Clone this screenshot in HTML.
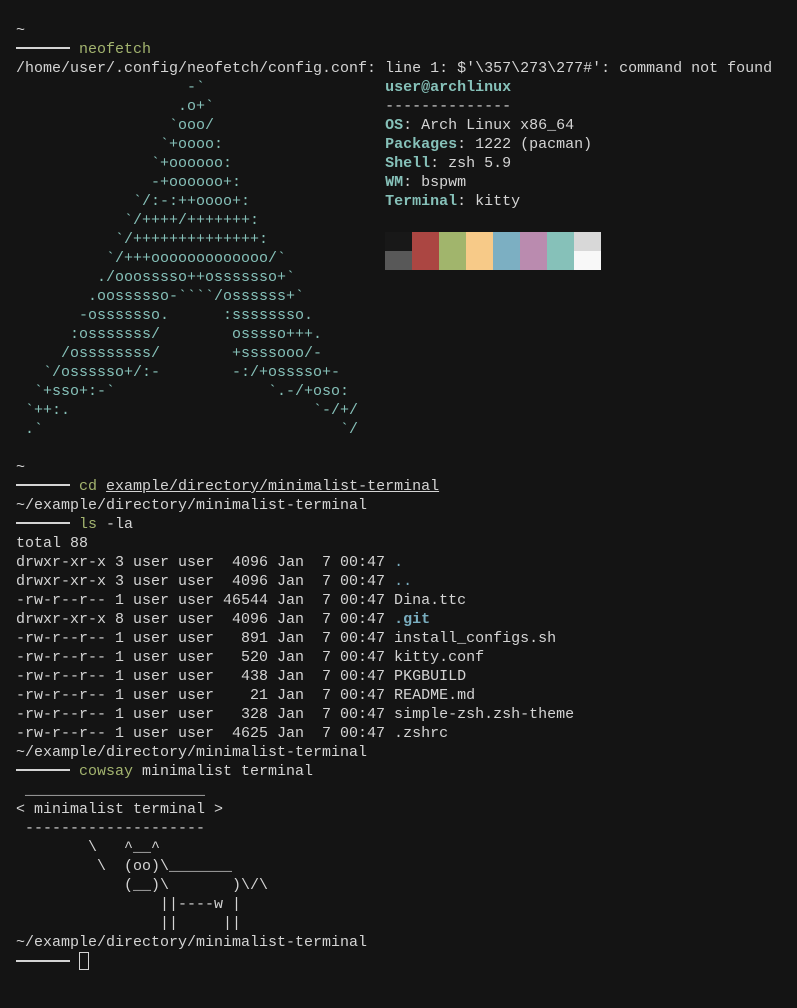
<!DOCTYPE html>
<html><head><meta charset="utf-8"><style>
html,body{margin:0;padding:0;background:#141414;width:797px;height:1008px;overflow:hidden}
pre{margin:0;position:absolute;left:16px;top:21px;font-family:"Liberation Mono","DejaVu Sans Mono",monospace;font-size:15px;line-height:19px;color:#d4d4d4;letter-spacing:0}
.c{color:#86c1b9}.b{color:#86c1b9;font-weight:bold}.g{color:#a3b46f}.bl{color:#7aaec0}.blb{color:#7aaec0;font-weight:bold}
.p{display:inline-block;width:54px;height:2px;background:#d4d4d4;vertical-align:middle;margin-right:9px;position:relative;top:-1px}
.u{text-decoration:underline}
.cur{display:inline-block;width:8px;height:16px;border:1px solid #d4d4d4;vertical-align:-4px}
.pal{position:absolute;left:385px;top:232px;display:grid;grid-template-columns:repeat(8,27px);grid-template-rows:19px 19px}
</style></head><body>
<pre>~
<span class="p"></span><span class="g">neofetch</span>
/home/user/.config/neofetch/config.conf: line 1: $'\357\273\277#': command not found
<span class="c">                   -&#96;                    </span><span class="b">user@archlinux</span>
<span class="c">                  .o+&#96;                   </span>--------------
<span class="c">                 &#96;ooo/                   </span><span class="b">OS</span>: Arch Linux x86_64
<span class="c">                &#96;+oooo:                  </span><span class="b">Packages</span>: 1222 (pacman)
<span class="c">               &#96;+oooooo:                 </span><span class="b">Shell</span>: zsh 5.9
<span class="c">               -+oooooo+:                </span><span class="b">WM</span>: bspwm
<span class="c">             &#96;/:-:++oooo+:               </span><span class="b">Terminal</span>: kitty
<span class="c">            &#96;/++++/+++++++:</span>
<span class="c">           &#96;/++++++++++++++:</span>
<span class="c">          &#96;/+++ooooooooooooo/&#96;</span>
<span class="c">         ./ooosssso++osssssso+&#96;</span>
<span class="c">        .oossssso-&#96;&#96;&#96;&#96;/ossssss+&#96;</span>
<span class="c">       -osssssso.      :ssssssso.</span>
<span class="c">      :osssssss/        osssso+++.</span>
<span class="c">     /ossssssss/        +ssssooo/-</span>
<span class="c">   &#96;/ossssso+/:-        -:/+osssso+-</span>
<span class="c">  &#96;+sso+:-&#96;                 &#96;.-/+oso:</span>
<span class="c"> &#96;++:.                           &#96;-/+/</span>
<span class="c"> .&#96;                                 &#96;/</span>

~
<span class="p"></span><span class="g">cd</span> <span class="u">example/directory/minimalist-terminal</span>
~/example/directory/minimalist-terminal
<span class="p"></span><span class="g">ls</span> -la
total 88
drwxr-xr-x 3 user user  4096 Jan  7 00:47 <span class="bl">.</span>
drwxr-xr-x 3 user user  4096 Jan  7 00:47 <span class="bl">..</span>
-rw-r--r-- 1 user user 46544 Jan  7 00:47 Dina.ttc
drwxr-xr-x 8 user user  4096 Jan  7 00:47 <span class="blb">.git</span>
-rw-r--r-- 1 user user   891 Jan  7 00:47 install_configs.sh
-rw-r--r-- 1 user user   520 Jan  7 00:47 kitty.conf
-rw-r--r-- 1 user user   438 Jan  7 00:47 PKGBUILD
-rw-r--r-- 1 user user    21 Jan  7 00:47 README.md
-rw-r--r-- 1 user user   328 Jan  7 00:47 simple-zsh.zsh-theme
-rw-r--r-- 1 user user  4625 Jan  7 00:47 .zshrc
~/example/directory/minimalist-terminal
<span class="p"></span><span class="g">cowsay</span> minimalist terminal
 ____________________
&lt; minimalist terminal &gt;
 --------------------
        \   ^__^
         \  (oo)\_______
            (__)\       )\/\
                ||----w |
                ||     ||
~/example/directory/minimalist-terminal
<span class="p"></span><span class="cur"></span></pre>
<div class="pal">
<div style="background:#181818"></div><div style="background:#ab4642"></div><div style="background:#a1b56c"></div><div style="background:#f7ca88"></div><div style="background:#7cafc2"></div><div style="background:#ba8baf"></div><div style="background:#86c1b9"></div><div style="background:#d8d8d8"></div>
<div style="background:#585858"></div><div style="background:#ab4642"></div><div style="background:#a1b56c"></div><div style="background:#f7ca88"></div><div style="background:#7cafc2"></div><div style="background:#ba8baf"></div><div style="background:#86c1b9"></div><div style="background:#f8f8f8"></div>
</div>
</body></html>
